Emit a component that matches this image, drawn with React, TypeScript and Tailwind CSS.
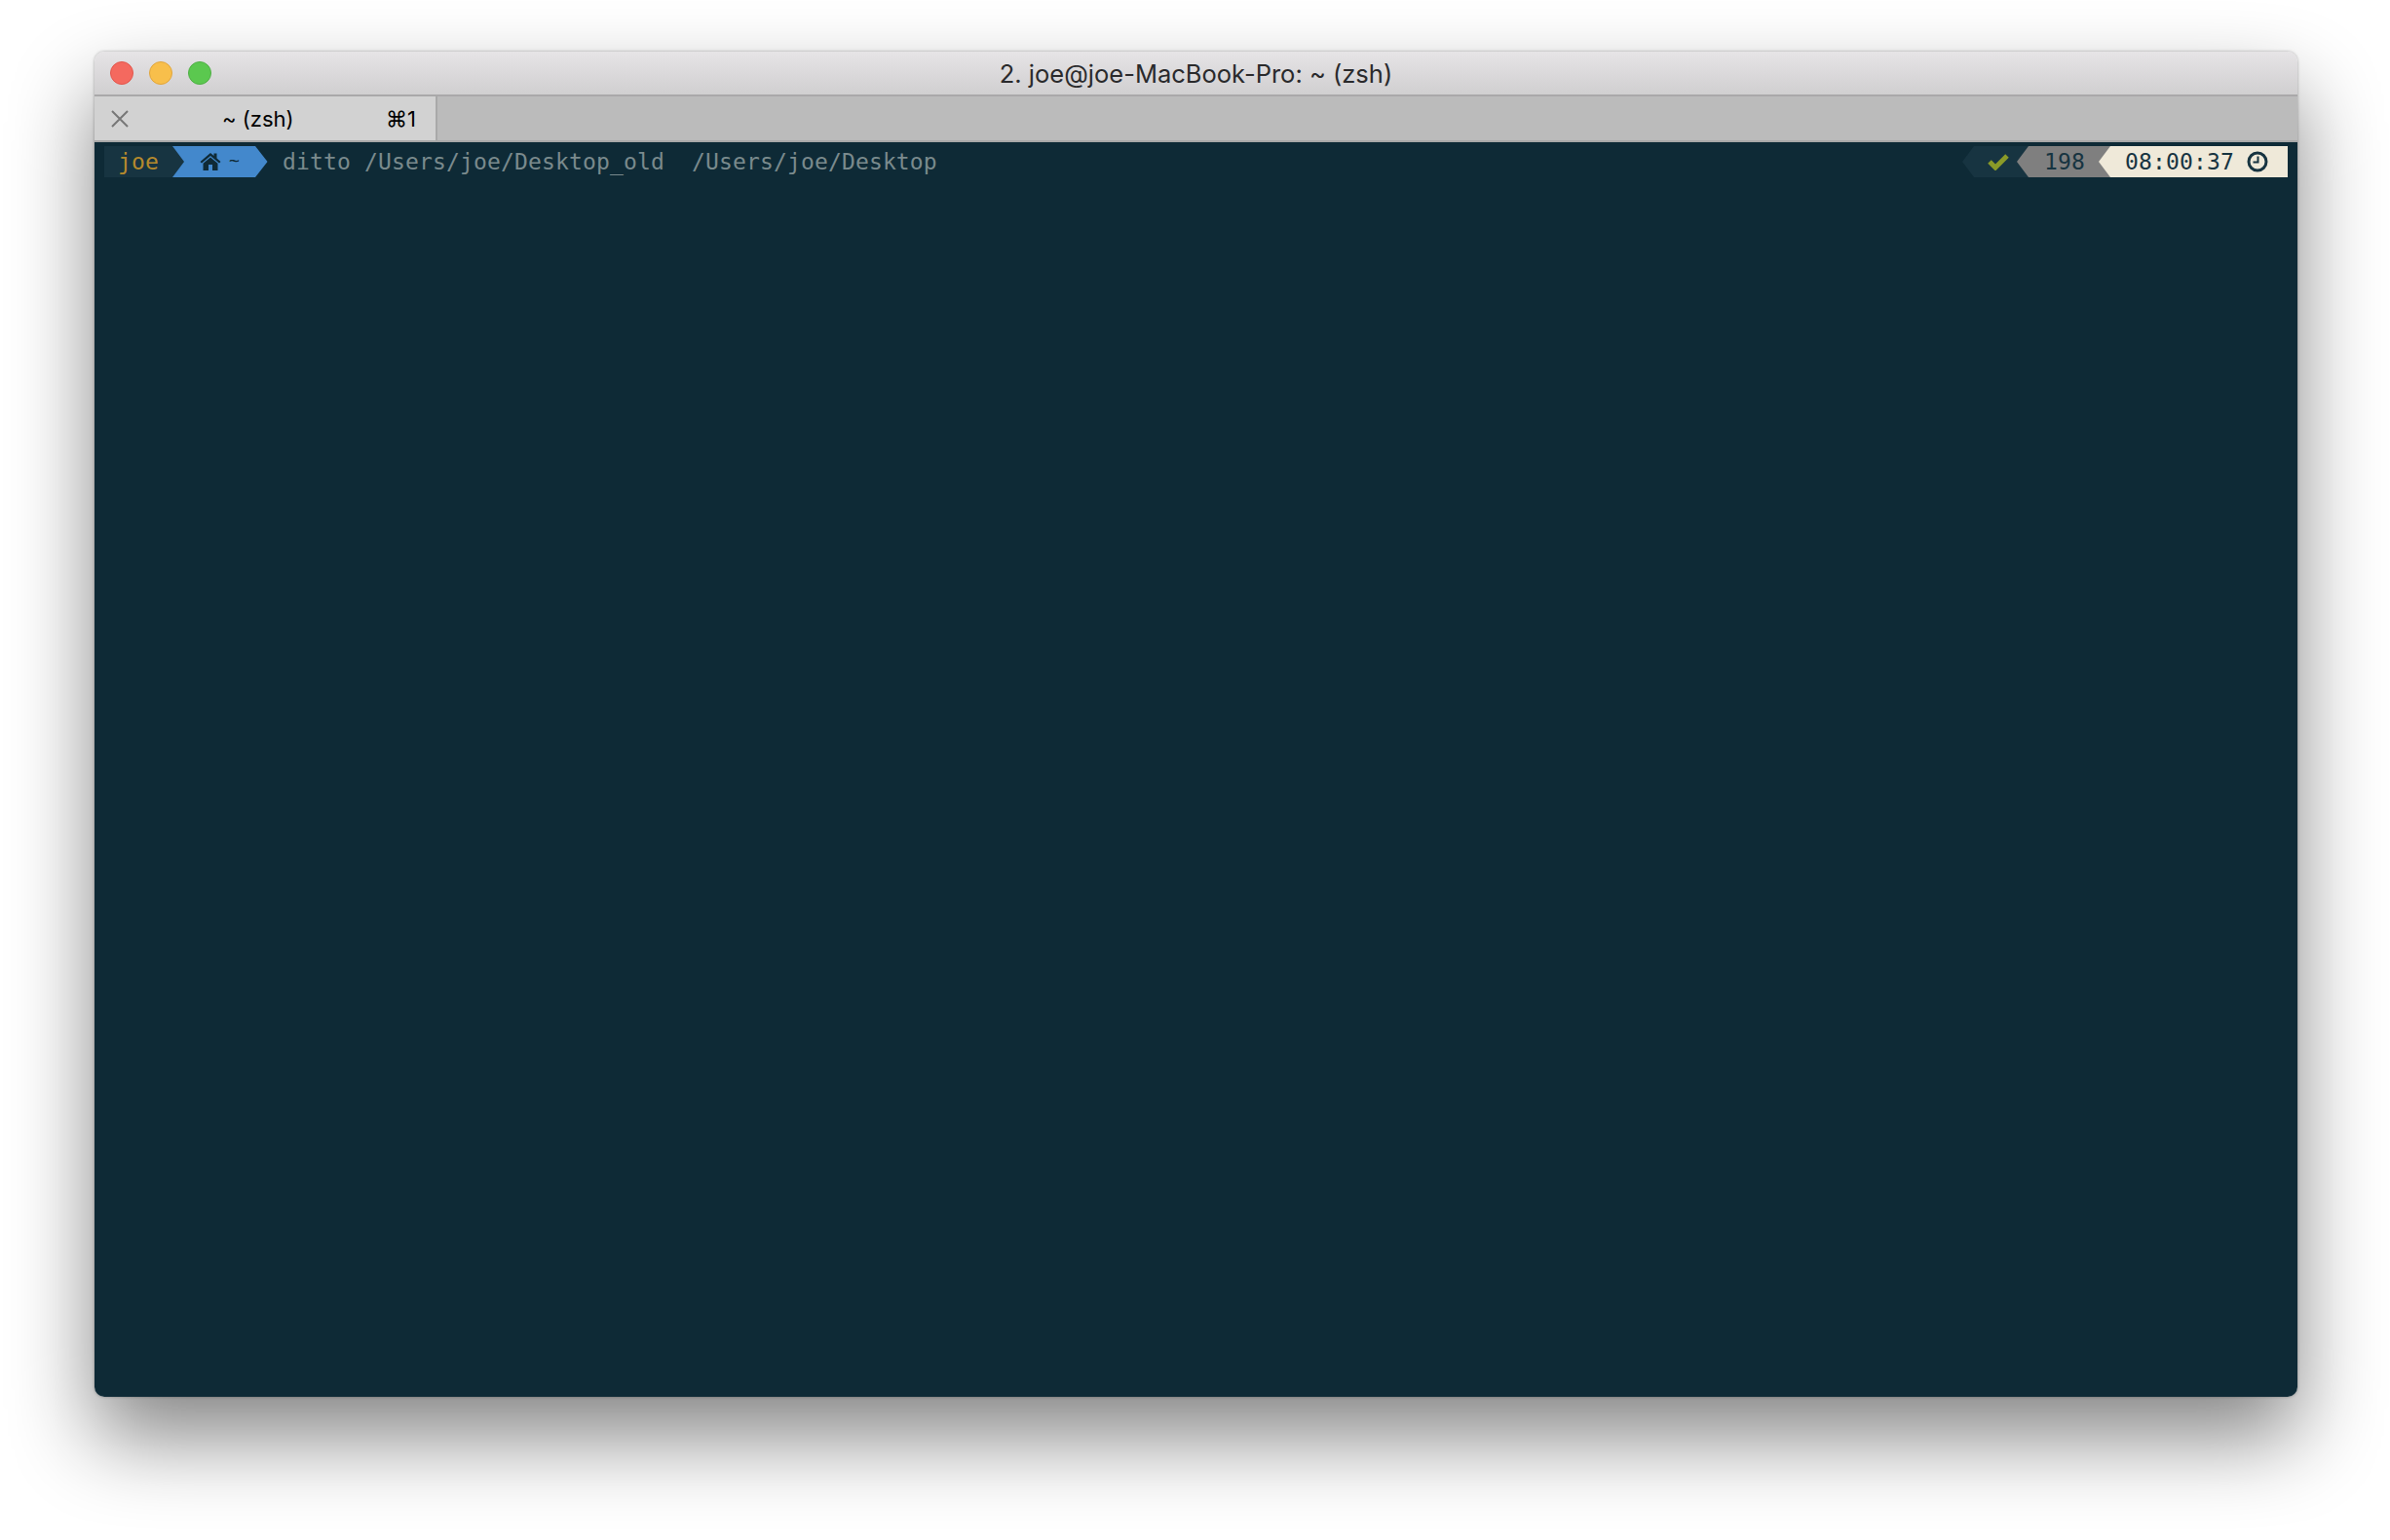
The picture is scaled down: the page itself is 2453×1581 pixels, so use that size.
export default function App() {
  const mono = "font-['DejaVu_Sans_Mono','Liberation_Mono',monospace] text-[23px] leading-[32px] tracking-[0.15px] whitespace-pre";
  return (
    <div className="h-[1581px] w-full overflow-hidden bg-white pl-[97px] pt-[53px]">
      <div className="flex h-[1381px] w-[2261px] flex-col overflow-hidden rounded-[10px] shadow-[0_0_3px_rgba(0,0,0,0.35),0_42px_85px_rgba(0,0,0,0.48)]">
        <div className="relative flex h-[46px] shrink-0 items-center gap-[16px] border-b-2 border-[#a9a8a9] bg-gradient-to-b from-[#e6e4e6] to-[#d0cfd0] pl-[16px]">
          <span className="h-[24px] w-[24px] rounded-full border border-[#e2564c] bg-[#f4695f]" />
          <span className="h-[24px] w-[24px] rounded-full border border-[#e0a53c] bg-[#f8bf4b]" />
          <span className="h-[24px] w-[24px] rounded-full border border-[#4fae45] bg-[#5bc84f]" />
          <div className="absolute inset-x-0 top-0 flex h-[46px] items-center justify-center font-['Inter','Liberation_Sans',sans-serif] text-[25.5px] text-[#2a2a2c]">
            2. joe@joe-MacBook-Pro: ~ (zsh)
          </div>
        </div>
        <div className="flex h-[47px] shrink-0 border-b-2 border-[#a8a8a8] bg-[#bbbbbb]">
          <div className="relative flex w-[352px] items-center border-r-2 border-[#a9a9a9] bg-[#d2d2d2] pt-[1px] font-['Inter','Liberation_Sans',sans-serif] text-[22px] text-black">
            <svg className="ml-[17px] h-[18px] w-[18px]" viewBox="0 0 18 18" fill="none" stroke="#777" strokeWidth="2">
              <path d="M1 1L17 17M17 1L1 17" />
            </svg>
            <span className="ml-[96px]">~ (zsh)</span>
            <span className="absolute left-[299px]">⌘1</span>
          </div>
        </div>
        <div className="flex min-h-0 flex-1 justify-between bg-[#0e2a36] px-[10px] pt-[4px]">
          <div className={`flex h-[32px] items-center ${mono}`}>
            <div className="flex h-[32px] w-[71px] items-center bg-[#173441] pl-[14px] text-[#b58a2d]">joe</div>
            <svg className="-ml-px h-[32px] w-[14px] shrink-0" viewBox="0 0 14 32"><path d="M0 0L13 16L0 32Z" fill="#173441" /></svg>
            <div className="relative -ml-[14px] flex h-[32px] w-[85px] items-center bg-[#4388cc] [clip-path:polygon(0_0,100%_0,100%_100%,0_100%,12px_16px)]">
              <svg className="ml-[28px] h-[22px] w-[22px] shrink-0" viewBox="0 0 22 22" fill="#0f2a36">
                <path d="M11 2L0.5 11L2 12.6L11 5L20 12.6L21.500 11L17.500 7.600V2.500H14.500V5Z" />
                <path d="M11 6.500L3.500 12.800V20H9V14H13V20H18.500V12.800Z" />
              </svg>
              <span className="ml-[8px] -translate-y-[1px] text-[18px] text-[#0f2a36]">~</span>
            </div>
            <svg className="h-[32px] w-[13px] shrink-0" viewBox="0 0 13 32"><path d="M0 0L12.500 16L0 32Z" fill="#4388cc" /></svg>
            <span className="ml-[15px] text-[#7a8a8d]">ditto /Users/joe/Desktop_old  /Users/joe/Desktop</span>
          </div>
          <div className={`flex h-[32px] items-center ${mono}`}>
            <svg className="h-[32px] w-[12px] shrink-0" viewBox="0 0 12 32"><path d="M12 0L0 16L12 32Z" fill="#173441" /></svg>
            <div className="flex h-[32px] w-[56px] items-center bg-[#173441]">
              <svg className="ml-[14px] h-[18px] w-[22px]" viewBox="0 0 22 18" fill="none" stroke="#8a9a28" strokeWidth="5">
                <path d="M2 9L8 15L20 3" />
              </svg>
            </div>
            <svg className="-ml-[12px] h-[32px] w-[12px] shrink-0" viewBox="0 0 12 32"><path d="M12 0L0 16L12 32Z" fill="#7f7f7f" /></svg>
            <div className="flex h-[32px] w-[84px] items-center bg-[#7f7f7f] pl-[16px] text-[#173441]">198</div>
            <svg className="-ml-[12px] h-[32px] w-[12px] shrink-0" viewBox="0 0 12 32"><path d="M12 0L0 16L12 32Z" fill="#efe9d9" /></svg>
            <div className="flex h-[32px] w-[182px] items-center bg-[#efe9d9] pl-[15px] text-[#173441]">
              08:00:37
              <svg className="ml-[13px] h-[22px] w-[22px]" viewBox="0 0 22 22" fill="none" stroke="#173441">
                <circle cx="11" cy="11" r="9" strokeWidth="3" />
                <path d="M11.500 5.500V11.500H6.500" strokeWidth="2" />
              </svg>
            </div>
          </div>
        </div>
      </div>
    </div>
  );
}
